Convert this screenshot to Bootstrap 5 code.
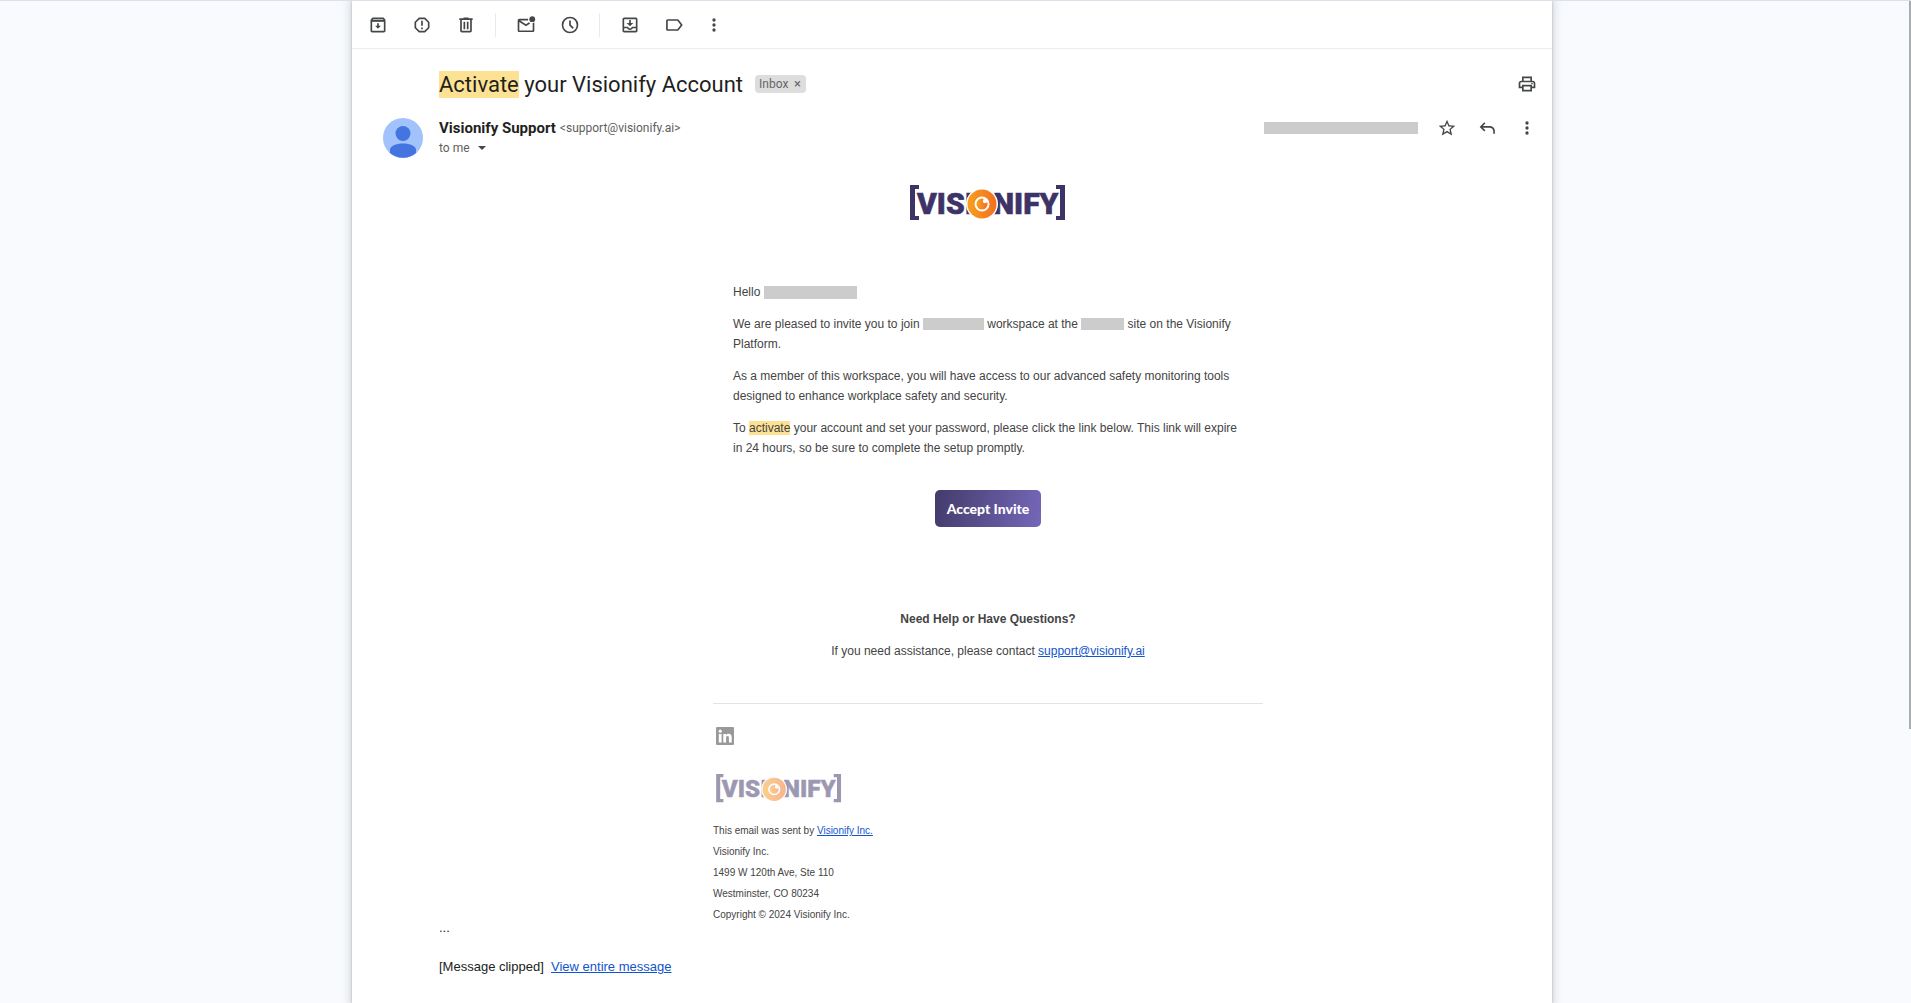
<!DOCTYPE html>
<html lang="en">
<head>
<meta charset="utf-8">
<meta name="viewport" content="width=device-width, initial-scale=1">
<title>Activate your Visionify Account</title>
<link href="https://cdn.jsdelivr.net/npm/bootstrap@5.3.0/dist/css/bootstrap.min.css" rel="stylesheet">
<style>
  body { background: #f8fafd; font-family: Roboto, "Liberation Sans", sans-serif; color: #1f1f1f; border-top: 1px solid #d9e2ea; min-height: 100vh; overflow: hidden; }
  .mail-wrap { padding-right: 7px; }
  .mail-panel { max-width: 1200px; min-height: calc(100vh - 1px); background: #fff; box-shadow: 0 0 2px rgba(60,64,67,.35), 0 0 8px 3px rgba(60,64,67,.15); }
  .mail-tools { height: 48px; padding-left: 14px; border-bottom: 1px solid #e9eef3; }
  .icon-btn { width: 24px; height: 24px; padding: 0; border: 0; background: none; color: #444746; display: flex; align-items: center; justify-content: center; }
  .icon-btn svg { width: 20px; height: 20px; fill: currentColor; display: block; }
  .tool-set { gap: 20px; padding: 0 17px 0 0; }
  .tool-set + .tool-set { border-left: 1px solid #e8eaed; padding-left: 18px; }
  .tool-more { margin-left: -4px; }
  .mail-content { padding: 0 15px 0 87px; }
  .subject-row, .sender-row { margin-right: -2px; }
  .subject-row { height: 28px; margin-top: 21px; }
  .subject { font-size: 22px; line-height: 27px; font-weight: 400; }
  .subject .hit { display: inline-block; }
  .hit { background: #fde293; color: inherit; }
  .inbox-chip { background: #ddd; color: #666; font-size: 12px; line-height: 18px; border-radius: 4px; padding: 0 3px 0 4px; margin-left: 12px; gap: 3px; }
  .chip-x { border: 0; background: none; padding: 0; color: #666; width: 12px; height: 18px; line-height: 18px; font-size: 13px; }
  .sender-row { margin-top: 20px; margin-left: -56px; gap: 16px; }
  .avatar { width: 40px; height: 40px; }
  .sender-name { font-size: 15px; line-height: 20px; font-weight: 700; }
  .sender-sub { font-size: 12px; line-height: 20px; color: #5e5e5e; }
  .sender-tools { gap: 16px; height: 20px; }
  .redact { display: inline-block; background: #ccc; height: 12px; vertical-align: -2px; }
  .redact-date { width: 154px; margin-right: 1px; }
  .redact-name { width: 93px; height: 13px; vertical-align: -3px; }
  .redact-team { width: 61px; }
  .redact-site { width: 43px; }
  .letter { max-width: 550px; margin: 27px auto 0; font: 12px/20px "Liberation Sans", sans-serif; color: #444; }
  .letter a, .clip-note a { color: #15c; }
  .logo-main { width: 158px; height: 36px; display: block; margin: 0 auto; }
  .logo-foot { width: 128px; height: 29px; display: block; opacity: .5; margin: 29px 0 17px 2px; }
  .letter-text { padding: 61px 20px 0; }
  .letter p { margin: 0 0 12px; }
  .accept-btn { width: 106px; height: 37px; padding: 0; border: 0; border-radius: 5px; color: #fff; background: linear-gradient(100deg, #433b6b, #7567b8); font: 900 14px/20px Lato, sans-serif; margin-top: 20px; }
  .help { margin-top: 82px; padding-bottom: 30px; border-bottom: 1px solid #e3e3e3; }
  .in-logo { width: 18px; height: 18px; display: block; margin: 23px 0 0 3px; }
  .letter-foot { font-size: 10px; line-height: 21px; }
  .dots-btn { border: 0; padding: 0; background: none; font: 13px/6px "Liberation Sans", sans-serif; color: #1f1f1f; display: block; }
  .clip-note { font: 13px/20px "Liberation Sans", sans-serif; color: #222; margin-top: 26px; }
  .scroll-thumb { position: fixed; right: 0; top: 1px; width: 2px; height: 728px; background: #aaadb0; }
</style>
<script src="https://cdn.jsdelivr.net/npm/bootstrap@5.3.0/dist/js/bootstrap.bundle.min.js"></script>
</head>
<body>
<svg width="0" height="0" class="position-absolute" aria-hidden="true">
  <defs>
    <linearGradient id="eye" x1="0" x2="1" y1="0" y2="0"><stop offset="0" stop-color="#f7a01e"/><stop offset="1" stop-color="#f36f21"/></linearGradient>
    <symbol id="brand" viewBox="0 0 158 36">
      <g fill="#3d3366">
        <path d="M1 0H10V4H6V31H10V35H1ZM147 0H156V35H147V31H151V4H147Z"/>
        <g stroke="#3d3366" stroke-width=".6" font-family="Roboto" font-weight="900" font-size="30">
        <text x="8" y="29">VISI</text>
        <text x="84" y="29">NIFY</text>
        </g>
      </g>
      <circle cx="73" cy="19" r="16" fill="#fff"/>
      <circle cx="73" cy="19" r="14.500" fill="url(#eye)"/>
      <circle cx="73" cy="19" r="7.500" fill="#fff"/>
      <circle cx="73" cy="19" r="5.500" fill="url(#eye)"/>
      <circle cx="76" cy="16" r="2.200" fill="#fff"/>
    </symbol>
  </defs>
</svg>
<div class="mail-wrap">
<main class="mail-panel mx-auto">
  <div class="mail-tools d-flex align-items-center" role="toolbar" aria-label="Message actions">
    <div class="tool-set d-flex align-items-center">
      <button class="icon-btn" aria-label="Archive"><svg viewBox="0 0 24 24"><path d="M20.500 5.200 19.200 3.500C18.900 3.200 18.500 3 18 3H6c-.5 0-.9.2-1.200.5L3.500 5.200C3.200 5.600 3 6 3 6.500V19c0 1.100.9 2 2 2h14c1.100 0 2-.9 2-2V6.500c0-.5-.2-.9-.5-1.300zM6.200 5h11.600l.8 1H5.400l.8-1zM5 19V8h14v11H5zm8-9h-2v3H8.500l3.500 3.500 3.500-3.500H13v-3z"/><path d="M5 5.500h14V8H5z" opacity=".4"/></svg></button>
      <button class="icon-btn" aria-label="Report spam"><svg viewBox="0 0 24 24"><path d="M15.700 3H8.300L3 8.300v7.400L8.300 21h7.400l5.300-5.300V8.300L15.700 3zM19 14.900 14.900 19H9.100L5 14.900V9.100L9.100 5h5.800L19 9.100v5.800zM11 7h2v6h-2zm0 8h2v2h-2z"/></svg></button>
      <button class="icon-btn" aria-label="Delete"><svg viewBox="0 0 24 24"><path d="M15 4V3H9v1H4v2h1v13c0 1.100.9 2 2 2h10c1.100 0 2-.9 2-2V6h1V4h-5zm2 15H7V6h10v13zM9 8h2v9H9zm4 0h2v9h-2z"/></svg></button>
    </div>
    <div class="tool-set d-flex align-items-center">
      <button class="icon-btn" aria-label="Mark as unread"><svg viewBox="0 0 24 24"><path d="M22 9v9.500c0 1.100-.9 2-2 2H4c-1.100 0-2-.9-2-2v-12c0-1.100.9-2 2-2h10.500v2H5l7 4.500 3.500-2.200 1.600 1.300L12 13.500l-8-5v10h16V9.500z"/><circle cx="19.500" cy="5" r="3.500"/></svg></button>
      <button class="icon-btn" aria-label="Snooze"><svg viewBox="0 0 24 24"><path d="M12 2a10 10 0 1 0 0 20 10 10 0 0 0 0-20zm0 18a8 8 0 1 1 0-16 8 8 0 0 1 0 16zM13 6.500h-2v6l4.200 4.200 1.400-1.400-3.600-3.600z"/></svg></button>
    </div>
    <div class="tool-set d-flex align-items-center">
      <button class="icon-btn" aria-label="Move to"><svg viewBox="0 0 24 24"><path d="M19 3H5c-1.100 0-2 .9-2 2v14c0 1.100.9 2 2 2h14c1.100 0 2-.9 2-2V5c0-1.100-.9-2-2-2zm0 16H5v-3h3.600c.7 1.200 2 2 3.400 2s2.700-.8 3.400-2H19v3zm0-5h-5c0 1.100-.9 2-2 2s-2-.9-2-2H5V5h14v9zm-3-4.500h-3V6h-2v3.500H8l4 4 4-4z"/></svg></button>
      <button class="icon-btn" aria-label="Labels"><svg viewBox="0 0 24 24"><path d="M17.600 5.800C17.300 5.300 16.700 5 16 5H4.500c-1.100 0-2 .9-2 2v10c0 1.100.9 2 2 2H16c.7 0 1.300-.3 1.600-.8L22.500 12l-4.900-6.200zM16 17H4.500V7H16l4 5-4 5z"/></svg></button>
      <button class="icon-btn tool-more" aria-label="More"><svg viewBox="0 0 24 24"><circle cx="12" cy="6" r="2"/><circle cx="12" cy="12" r="2"/><circle cx="12" cy="18" r="2"/></svg></button>
    </div>
  </div>

  <div class="mail-content">
    <div class="subject-row d-flex align-items-center">
      <h1 class="subject m-0"><span class="hit">Activate</span> your Visionify Account</h1>
      <span class="inbox-chip d-flex align-items-center">Inbox <button class="chip-x" aria-label="Remove label Inbox">×</button></span>
      <button class="icon-btn ms-auto" aria-label="Print"><svg viewBox="0 0 24 24"><path d="M19 8h-1V3H6v5H5c-1.700 0-3 1.300-3 3v6h4v4h12v-4h4v-6c0-1.700-1.300-3-3-3zM8 5h8v3H8V5zm8 14H8v-4h8v4zm2-4v-2H6v2H4v-4c0-.6.4-1 1-1h14c.6 0 1 .4 1 1v4h-2z"/><circle cx="18" cy="11.500" r="1"/></svg></button>
    </div>

    <div class="sender-row d-flex align-items-start">
      <svg class="avatar flex-shrink-0" viewBox="0 0 40 40" role="img" aria-label="Visionify Support"><circle cx="20" cy="20" r="20" fill="#a1c2fa"/><circle cx="20" cy="15.500" r="7.500" fill="#4374e0"/><path d="M7 35v-3c0-4 6-6.500 13-6.500S33 28 33 32v3a20 20 0 0 1-26 0z" fill="#4374e0"/></svg>
      <div class="flex-grow-1">
        <div class="d-flex justify-content-between align-items-center sender-tools">
          <div class="d-flex align-items-center gap-1"><span class="sender-name">Visionify Support</span><span class="sender-sub">&lt;support@visionify.ai&gt;</span></div>
          <div class="d-flex align-items-center sender-tools">
            <span class="redact redact-date"></span>
            <button class="icon-btn" aria-label="Star"><svg viewBox="0 0 24 24"><path d="m22 9.200-7.200-.6L12 2 9.200 8.600 2 9.200l5.500 4.700L5.800 21l6.200-3.700 6.200 3.700-1.600-7.100L22 9.200zM12 15.400l-3.800 2.300 1-4.300-3.300-2.900 4.400-.4L12 6.100l1.700 4 4.400.4-3.300 2.900 1 4.300-3.800-2.300z"/></svg></button>
            <button class="icon-btn" aria-label="Reply"><svg viewBox="0 0 24 24"><path d="M8.700 5.200 3.200 10.700l5.500 5.500 1.400-1.400-3.100-3.100H15c2.800 0 4.500 1.700 4.500 4.500V19h2v-2.800c0-3.900-2.600-6.500-6.500-6.500H7l3.100-3.100z"/></svg></button>
            <button class="icon-btn" aria-label="More"><svg viewBox="0 0 24 24"><circle cx="12" cy="6" r="2"/><circle cx="12" cy="12" r="2"/><circle cx="12" cy="18" r="2"/></svg></button>
          </div>
        </div>
        <div class="sender-sub d-flex align-items-center gap-2">to me <svg width="8" height="4" viewBox="0 0 8 4" aria-hidden="true"><path d="M0 0h8L4 4z" fill="#444746"/></svg></div>
      </div>
    </div>

    <article class="letter">
      <svg class="logo-main" role="img" aria-label="Visionify"><use href="#brand"/></svg>
      <div class="letter-text">
        <p>Hello <span class="redact redact-name"></span></p>
        <p>We are pleased to invite you to join <span class="redact redact-team"></span> workspace at the <span class="redact redact-site"></span> site on the Visionify Platform.</p>
        <p>As a member of this workspace, you will have access to our advanced safety monitoring tools designed to enhance workplace safety and security.</p>
        <p>To <span class="hit">activate</span> your account and set your password, please click the link below. This link will expire in 24 hours, so be sure to complete the setup promptly.</p>
      </div>
      <div class="text-center"><button class="btn accept-btn">Accept Invite</button></div>
      <div class="help text-center">
        <p><strong>Need Help or Have Questions?</strong></p>
        <p>If you need assistance, please contact <a href="#">support@visionify.ai</a></p>
      </div>
      <a href="#" class="d-block" aria-label="LinkedIn"><svg class="in-logo" viewBox="0 0 18 18"><rect width="18" height="18" rx="1" fill="#999"/><g fill="#fff"><circle cx="4.200" cy="4.200" r="1.600"/><path d="M2.800 7h2.800v8.500H2.800zM7.300 7H10v1.200c.5-.9 1.500-1.400 2.600-1.400 2.400 0 3.100 1.500 3.100 3.800v4.900h-2.800V11c0-1.100-.2-2-1.300-2-1.200 0-1.500.9-1.500 2v4.500H7.300z"/></g></svg></a>
      <svg class="logo-foot" role="img" aria-label="Visionify"><use href="#brand"/></svg>
      <div class="letter-foot">
        <div>This email was sent by <a href="#">Visionify Inc.</a></div>
        <div>Visionify Inc.</div>
        <div>1499 W 120th Ave, Ste 110</div>
        <div>Westminster, CO 80234</div>
        <div>Copyright © 2024 Visionify Inc.</div>
      </div>
    </article>
    <button class="dots-btn" aria-label="Show trimmed content">...</button>
    <div class="clip-note">[Message clipped]&nbsp; <a href="#">View entire message</a></div>
  </div>
</main>
</div>
<div class="scroll-thumb"></div>
</body>
</html>
